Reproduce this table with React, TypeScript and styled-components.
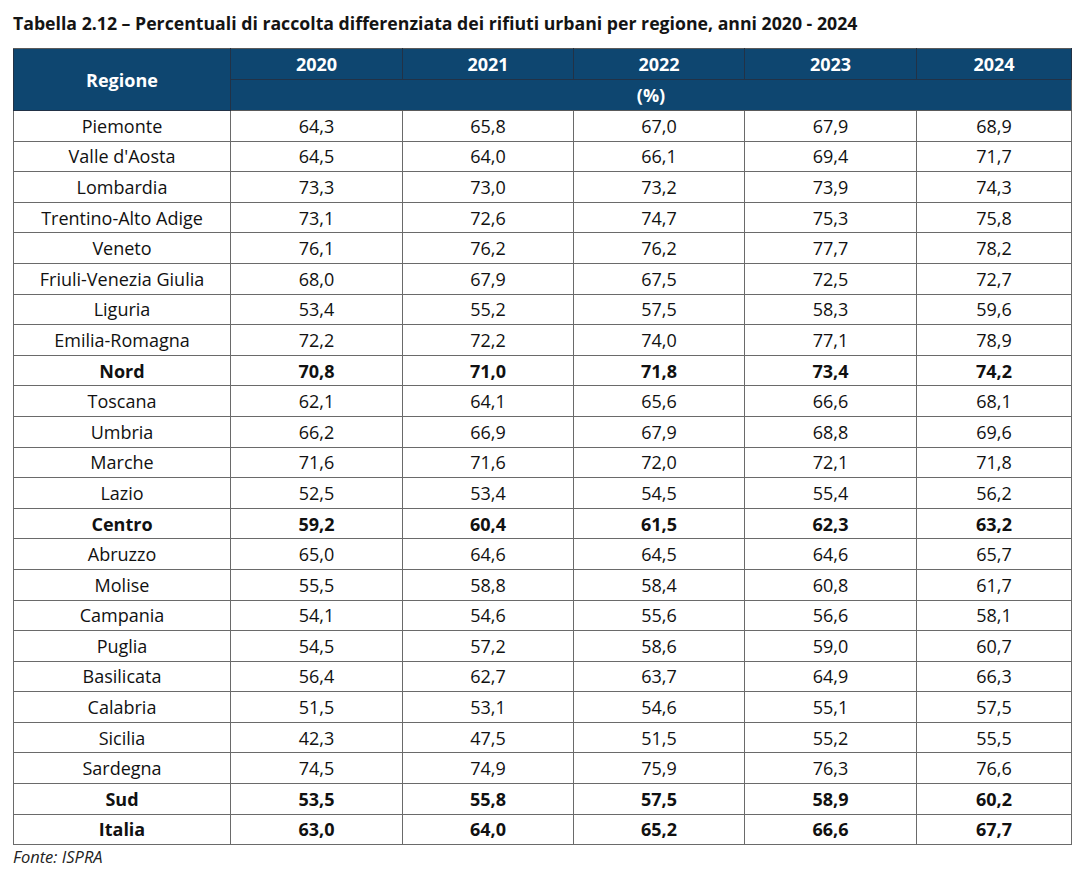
import styled, { createGlobalStyle } from "styled-components";

// ─── Global ───────────────────────────────────────────────────────────────────

const GlobalStyle = createGlobalStyle`
  html, body {
    margin: 0;
    padding: 0;
    background: #ffffff;
  }
  body {
    font-family: "Open Sans", "Liberation Sans", sans-serif;
    color: #111111;
  }
`;

// ─── Styled Components ────────────────────────────────────────────────────────

const Page = styled.div`
  width: 1080px;
  padding: 12px 9px 0 13px;
  box-sizing: border-box;
`;

const Title = styled.h1`
  margin: 0 0 14px;
  font-size: 17.7px;
  line-height: 22px;
  font-weight: 700;
  color: #141414;
  white-space: nowrap;
`;

const Table = styled.table`
  width: 1058px;
  border-collapse: collapse;
  table-layout: fixed;
  border: 1.5px solid #5a5a5a;
`;

const HeadCell = styled.th`
  background: #0e4670;
  color: #ffffff;
  font-size: 18px;
  font-weight: 700;
  text-align: center;
  padding: 0;
  height: 30px;
  border-left: 1px solid #223246;
  border-bottom: 1px solid #223246;
  border-right: 1px solid #223246;
  border-top: 1px solid #5a5a5a;
`;

const UnitCell = styled(HeadCell)`
  border-left: none;
  border-right: none;
  border-bottom: 1.5px solid #5a5a5a;
`;

const Cell = styled.td<{ $bold?: boolean }>`
  height: 29.6px;
  padding: 0;
  text-align: center;
  font-size: 18px;
  font-weight: ${({ $bold }) => ($bold ? 700 : 400)};
  border: 1px solid #6a6a6a;
  color: #111111;
`;

const Source = styled.div`
  margin-top: 0;
  font-size: 16.5px;
  font-style: italic;
  color: #222222;
`;

// ─── Data ─────────────────────────────────────────────────────────────────────

const YEARS = ["2020", "2021", "2022", "2023", "2024"];
const WIDTHS = [217, 172, 171, 171, 172, 155];

const ROWS: { name: string; values: string[]; total?: boolean }[] = [
  { name: "Piemonte", values: ["64,3", "65,8", "67,0", "67,9", "68,9"] },
  { name: "Valle d'Aosta", values: ["64,5", "64,0", "66,1", "69,4", "71,7"] },
  { name: "Lombardia", values: ["73,3", "73,0", "73,2", "73,9", "74,3"] },
  { name: "Trentino-Alto Adige", values: ["73,1", "72,6", "74,7", "75,3", "75,8"] },
  { name: "Veneto", values: ["76,1", "76,2", "76,2", "77,7", "78,2"] },
  { name: "Friuli-Venezia Giulia", values: ["68,0", "67,9", "67,5", "72,5", "72,7"] },
  { name: "Liguria", values: ["53,4", "55,2", "57,5", "58,3", "59,6"] },
  { name: "Emilia-Romagna", values: ["72,2", "72,2", "74,0", "77,1", "78,9"] },
  { name: "Nord", values: ["70,8", "71,0", "71,8", "73,4", "74,2"], total: true },
  { name: "Toscana", values: ["62,1", "64,1", "65,6", "66,6", "68,1"] },
  { name: "Umbria", values: ["66,2", "66,9", "67,9", "68,8", "69,6"] },
  { name: "Marche", values: ["71,6", "71,6", "72,0", "72,1", "71,8"] },
  { name: "Lazio", values: ["52,5", "53,4", "54,5", "55,4", "56,2"] },
  { name: "Centro", values: ["59,2", "60,4", "61,5", "62,3", "63,2"], total: true },
  { name: "Abruzzo", values: ["65,0", "64,6", "64,5", "64,6", "65,7"] },
  { name: "Molise", values: ["55,5", "58,8", "58,4", "60,8", "61,7"] },
  { name: "Campania", values: ["54,1", "54,6", "55,6", "56,6", "58,1"] },
  { name: "Puglia", values: ["54,5", "57,2", "58,6", "59,0", "60,7"] },
  { name: "Basilicata", values: ["56,4", "62,7", "63,7", "64,9", "66,3"] },
  { name: "Calabria", values: ["51,5", "53,1", "54,6", "55,1", "57,5"] },
  { name: "Sicilia", values: ["42,3", "47,5", "51,5", "55,2", "55,5"] },
  { name: "Sardegna", values: ["74,5", "74,9", "75,9", "76,3", "76,6"] },
  { name: "Sud", values: ["53,5", "55,8", "57,5", "58,9", "60,2"], total: true },
  { name: "Italia", values: ["63,0", "64,0", "65,2", "66,6", "67,7"], total: true },
];

// ─── Component ────────────────────────────────────────────────────────────────

export default function App() {
  return (
    <>
      <GlobalStyle />
      <Page>
        <Title>
          Tabella 2.12 – Percentuali di raccolta differenziata dei rifiuti urbani per regione, anni 2020 - 2024
        </Title>
        <Table>
          <colgroup>
            {WIDTHS.map((w, i) => (
              <col key={i} style={{ width: w }} />
            ))}
          </colgroup>
          <thead>
            <tr>
              <HeadCell rowSpan={2}>Regione</HeadCell>
              {YEARS.map((y) => (
                <HeadCell key={y}>{y}</HeadCell>
              ))}
            </tr>
            <tr>
              <UnitCell colSpan={5}>(%)</UnitCell>
            </tr>
          </thead>
          <tbody>
            {ROWS.map((row) => (
              <tr key={row.name}>
                <Cell $bold={row.total}>{row.name}</Cell>
                {row.values.map((v, i) => (
                  <Cell key={i} $bold={row.total}>
                    {v}
                  </Cell>
                ))}
              </tr>
            ))}
          </tbody>
        </Table>
        <Source>Fonte: ISPRA</Source>
      </Page>
    </>
  );
}
